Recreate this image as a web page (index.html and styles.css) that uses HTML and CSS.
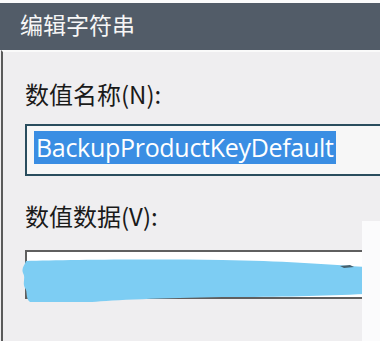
FILE: index.html
```html
<!doctype html>
<html>
<head>
<meta charset="utf-8">
<title>编辑字符串</title>
<link rel="stylesheet" href="styles.css">
</head>
<body>
<div class="strip"></div>
<div class="titlebar">编辑字符串</div>
<div class="dialog">
	<div class="label label-name">数值名称(N):</div>
	<div class="field field-name"><span class="sel">BackupProductKeyDefault</span></div>
	<div class="label label-data">数值数据(V):</div>
	<div class="field field-data"></div>
	<svg class="scribble" width="344" height="46" viewBox="0 0 344 46">
		<path d="M4 3 C40 2 120 1 200 2 C260 3 300 6 344 9 L344 36 C300 38 260 39 200 39 C140 40 90 42 70 44 L8 44 C3 40 6 34 3 30 C0 25 4 20 1 15 C-1 10 3 7 4 3 Z" fill="#7dcdf3"/>
		<path d="M318 8 L328 7 L332 9 L322 10 Z" fill="#44606e"/>
	</svg>
	<div class="panel"></div>
</div>
</body>
</html>
```
FILE: styles.css
```css
*{ margin:0; padding:0;}
html,body{ width:380px; height:341px; overflow:hidden;}
body{ background:#efeef0; font-family:"Noto Sans CJK SC","Noto Sans",sans-serif;}
.strip{ height:3px; background:#fbfbfb;}
.titlebar{ height:47px; background:#525c68; color:#f6f6f6; font-size:23px; line-height:42px; padding-left:20px;}
.dialog{ position:relative; height:289px; margin-left:1px; border-left:2px solid #5a5a5a; border-top:2px solid #fafafa; padding-left:22px;}
.label{ font-size:24px; line-height:30px; color:#1a1a1a; height:30px;}
.label-name{ margin-top:27px;}
.label-data{ margin-top:25px;}
.field{ box-sizing:border-box;}
.field-name{ margin-top:15px; height:52px; border:2px solid #2a4d5e; border-right:none; background:#f7f7f7; padding:5px 0 0 7px;}
.sel{ display:inline-block; height:33px; line-height:33px; background:#3a8ee3; color:#fff; font-family:"Open Sans","Noto Sans",sans-serif; font-size:25px; padding:0 2px 0 2px; letter-spacing:-0.3px;}
.field-data{ margin-top:19px; height:49px; border:2px solid #5f5f5f; border-right:none; background:#fff;}
.scribble{ position:absolute; left:19px; top:206px;}
.panel{ position:absolute; left:359px; right:0; top:169px; height:120px; background:#fbfbfc;}
```
